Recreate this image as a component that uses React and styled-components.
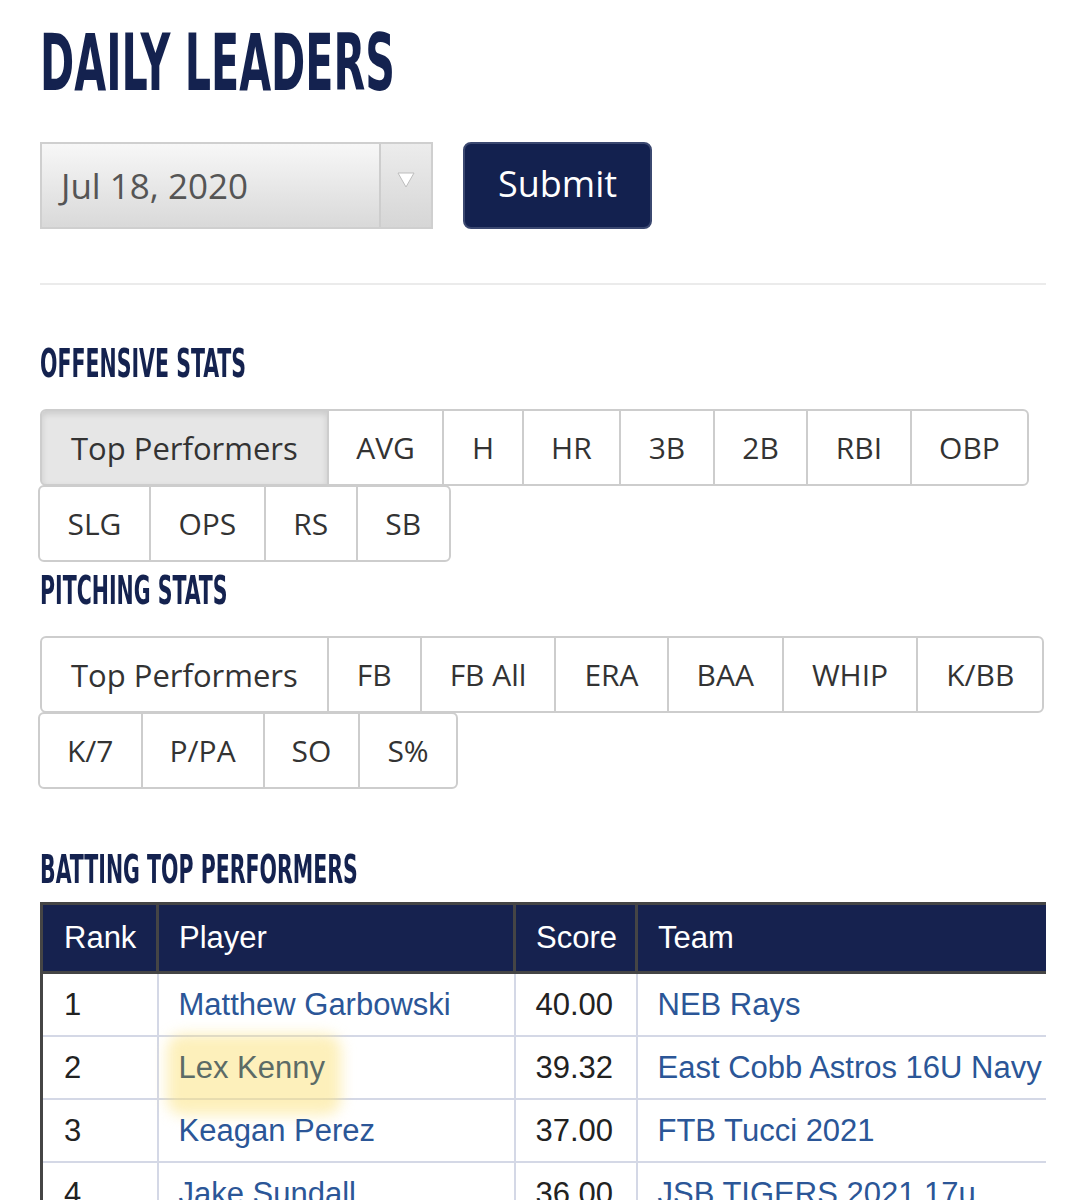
import React from 'react'
import styled, { createGlobalStyle } from 'styled-components'

const GlobalStyle = createGlobalStyle`
  html, body {
    margin: 0;
    padding: 0;
    background: #fff;
  }
  body {
    font-family: 'Open Sans', 'Liberation Sans', sans-serif;
    color: #333;
  }
`

const Page = styled.div`
  width: 1085px;
  padding: 0 39px 0 40px;
  box-sizing: border-box;
  overflow: hidden;
`

const Title = styled.h1`
  margin: 0;
  padding-top: 24px;
  height: 142px;
  box-sizing: border-box;
  font-family: 'DejaVu Sans Condensed', 'DejaVu Sans', sans-serif;
  font-weight: 700;
  font-size: 79px;
  line-height: 79px;
  color: #14224f;
  white-space: nowrap;
  transform: scaleX(0.58);
  transform-origin: left center;
`

const Heading = styled.h2`
  margin: 0;
  height: ${({ h }) => h}px;
  font-family: 'DejaVu Sans Condensed', 'DejaVu Sans', sans-serif;
  font-weight: 700;
  font-size: 39px;
  line-height: 40px;
  color: #14224f;
  white-space: nowrap;
  transform: scaleX(0.585);
  transform-origin: left top;
`

const Spacer = styled.div`
  height: ${({ h }) => h}px;
`

const FormRow = styled.div`
  display: flex;
  align-items: flex-start;
  gap: 30px;
  height: 141px;
  border-bottom: 2px solid #ebebeb;
`

const Select = styled.div`
  display: flex;
  width: 393px;
  height: 87px;
  box-sizing: border-box;
  border: 2px solid #cfcfcf;
  background: linear-gradient(#f7f7f7, #d9d9d9);
`

const SelectValue = styled.div`
  flex: 1;
  display: flex;
  align-items: center;
  padding-left: 19px;
  font-size: 35px;
  color: #555;
`

const SelectArrow = styled.div`
  width: 52px;
  border-left: 2px solid #cdcdcd;
  background: linear-gradient(#ececec, #d6d6d6);
  display: flex;
  justify-content: center;
  padding-top: 28px;
  box-sizing: border-box;
`

const SubmitButton = styled.button`
  width: 189px;
  height: 87px;
  border: 2px solid #3b4870;
  border-radius: 8px;
  background: #13214f;
  color: #fff;
  font-family: 'Open Sans', sans-serif;
  font-size: 36px;
  padding: 0 0 4px;
`

const Tabs = styled.div`
  display: flex;
  flex-direction: column;
  align-items: flex-start;
`

const TabRow = styled.div`
  display: flex;
  margin-left: ${({ shift }) => shift || 0}px;
  margin-top: ${({ shift }) => (shift ? -1 : 0)}px;
`

const Tab = styled.div`
  height: 77px;
  box-sizing: border-box;
  padding: 0 ${({ pad }) => pad}px;
  display: flex;
  align-items: center;
  justify-content: center;
  font-size: ${({ wide }) => (wide ? 31 : 30)}px;
  color: #333;
  border: 2px solid #cdcdcd;
  margin-left: -2px;
  background: ${({ active }) => (active ? '#e6e6e6' : '#fff')};
  box-shadow: ${({ active }) =>
    active ? 'inset 0 3px 6px rgba(0,0,0,0.12)' : 'none'};
  &:first-child {
    margin-left: 0;
    border-radius: 6px 0 0 6px;
  }
  &:last-child {
    border-radius: 0 6px 6px 0;
  }
`

const TableClip = styled.div`
  width: 1006px;
  overflow: hidden;
`

const Table = styled.table`
  border-collapse: collapse;
  table-layout: fixed;
  width: 1100px;
  font-family: 'Liberation Sans', Arial, sans-serif;
  font-size: 31px;
`

const Th = styled.th`
  width: ${({ w }) => w}px;
  height: 69px;
  box-sizing: border-box;
  background: #16224f;
  color: #fff;
  font-weight: 400;
  text-align: left;
  padding: 0 20px;
  border: 3px solid #454545;
  border-right: none;
  &:first-child {
    padding-left: 21px;
  }
`

const Td = styled.td`
  height: 61px;
  padding: 0 20px;
  border: 2px solid #d4d8e6;
  border-top: none;
  white-space: nowrap;
  color: #222;
  &:first-child {
    border-left: 3px solid #454545;
    padding-left: 21px;
  }
`

const Link = styled.span`
  color: #2b5697;
`

const Highlight = styled.span`
  position: relative;
  color: #5c6b66;
  &::before {
    content: '';
    position: absolute;
    left: -12px;
    right: -16px;
    top: -16px;
    bottom: -30px;
    background: rgba(252, 226, 120, 0.5);
    border-radius: 16px;
    filter: blur(7px);
    z-index: -1;
  }
`

const Cell = styled.span`
  position: relative;
  z-index: 0;
`

const offensive1 = ['Top Performers', 'AVG', 'H', 'HR', '3B', '2B', 'RBI', 'OBP']
const offensive2 = ['SLG', 'OPS', 'RS', 'SB']
const pitching1 = ['Top Performers', 'FB', 'FB All', 'ERA', 'BAA', 'WHIP', 'K/BB']
const pitching2 = ['K/7', 'P/PA', 'SO', 'S%']

const rows = [
  { rank: 1, player: 'Matthew Garbowski', score: '40.00', team: 'NEB Rays' },
  { rank: 2, player: 'Lex Kenny', score: '39.32', team: 'East Cobb Astros 16U Navy', mark: true },
  { rank: 3, player: 'Keagan Perez', score: '37.00', team: 'FTB Tucci 2021' },
  { rank: 4, player: 'Jake Sundall', score: '36.00', team: 'JSB TIGERS 2021 17u' },
]

const TabGroup = ({ first, second, activeFirst, pad, pad2 }) => (
  <Tabs>
    <TabRow>
      {first.map((t, i) => (
        <Tab key={t} active={activeFirst && i === 0} wide={i === 0} pad={i === 0 ? 29 : pad}>
          {t}
        </Tab>
      ))}
    </TabRow>
    <TabRow shift={-2}>
      {second.map((t) => (
        <Tab key={t} pad={pad2}>{t}</Tab>
      ))}
    </TabRow>
  </Tabs>
)

const App = () => {
  return (
    <Page>
      <GlobalStyle />
      <Title>DAILY LEADERS</Title>
      <FormRow>
        <Select>
          <SelectValue>Jul 18, 2020</SelectValue>
          <SelectArrow>
            <svg width="18" height="16" viewBox="0 0 18 16">
              <path d="M1 1 L17 1 L9 15 Z" fill="#fff" stroke="#bdbdbd" strokeWidth="1" />
            </svg>
          </SelectArrow>
        </Select>
        <SubmitButton>Submit</SubmitButton>
      </FormRow>

      <Spacer h={59} />
      <Heading h={65}>OFFENSIVE STATS</Heading>
      <TabGroup first={offensive1} second={offensive2} activeFirst pad={27.5} pad2={27.5} />

      <Spacer h={9} />
      <Heading h={65}>PITCHING STATS</Heading>
      <TabGroup first={pitching1} second={pitching2} pad={28} pad2={27} />

      <Spacer h={61} />
      <Heading h={52}>BATTING TOP PERFORMERS</Heading>
      <TableClip>
        <Table>
          <thead>
            <tr>
              <Th w={116}>Rank</Th>
              <Th w={357}>Player</Th>
              <Th w={122}>Score</Th>
              <Th w={505}>Team</Th>
            </tr>
          </thead>
          <tbody>
            {rows.map((r) => (
              <tr key={r.rank}>
                <Td>{r.rank}</Td>
                <Td>
                  <Cell>
                    {r.mark ? <Highlight>{r.player}</Highlight> : <Link>{r.player}</Link>}
                  </Cell>
                </Td>
                <Td>{r.score}</Td>
                <Td><Link>{r.team}</Link></Td>
              </tr>
            ))}
          </tbody>
        </Table>
      </TableClip>
    </Page>
  )
}

export default App
